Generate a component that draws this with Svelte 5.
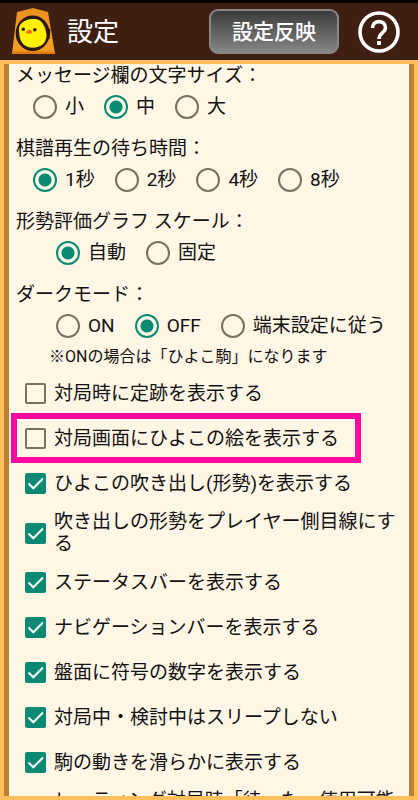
<script lang="ts">
	interface RadioGroup {
		name: string;
		title: string;
		options: string[];
		value: string;
		deep?: boolean;
		note?: string;
	}

	interface Toggle {
		label: string;
		checked: boolean;
		highlight?: boolean;
	}

	let groups = $state<RadioGroup[]>([
		{ name: 'font-size', title: 'メッセージ欄の文字サイズ：', options: ['小', '中', '大'], value: '中' },
		{ name: 'wait', title: '棋譜再生の待ち時間：', options: ['1秒', '2秒', '4秒', '8秒'], value: '1秒' },
		{ name: 'scale', title: '形勢評価グラフ スケール：', options: ['自動', '固定'], value: '自動', deep: true },
		{
			name: 'dark',
			title: 'ダークモード：',
			options: ['ON', 'OFF', '端末設定に従う'],
			value: 'OFF',
			deep: true,
			note: '※ONの場合は「ひよこ駒」になります'
		}
	]);

	let toggles = $state<Toggle[]>([
		{ label: '対局時に定跡を表示する', checked: false },
		{ label: '対局画面にひよこの絵を表示する', checked: false, highlight: true },
		{ label: 'ひよこの吹き出し(形勢)を表示する', checked: true },
		{ label: '吹き出しの形勢をプレイヤー側目線にする', checked: true },
		{ label: 'ステータスバーを表示する', checked: true },
		{ label: 'ナビゲーションバーを表示する', checked: true },
		{ label: '盤面に符号の数字を表示する', checked: true },
		{ label: '対局中・検討中はスリープしない', checked: true },
		{ label: '駒の動きを滑らかに表示する', checked: true },
		{ label: 'レーティング対局時「待った」使用可能にする', checked: true }
	]);
</script>

<div class="app">
	<header>
		<svg class="logo" viewBox="0 0 44 48" aria-hidden="true">
			<defs>
				<linearGradient id="koma" x1="0" y1="0" x2="0" y2="1">
					<stop offset="0" stop-color="#e88f1c" />
					<stop offset="0.5" stop-color="#f9a02a" />
					<stop offset="1" stop-color="#f59a1e" />
				</linearGradient>
			</defs>
			<path d="M21 0 L36 4 L43 46 H0 L5 4 Z" fill="url(#koma)" />
			<path d="M0 46 L0.5 43.500 H42.500 L43 46 Z" fill="#dd7d10" />
			<ellipse cx="20.700" cy="25.300" rx="15.300" ry="16" fill="#fbb12a" stroke="#2b1a10" stroke-width="3.500" />
			<path
				d="M21 11 C28 10.500 32 15 32 21 C32 23 35 24 34.500 28 C34 36 28 39.500 21 39.500 C13 39.500 8.500 35 8.500 29 C8.500 26 6.500 24 7 20 C8 14 14 11.500 21 11 Z"
				fill="#fff200"
			/>
			<path d="M35 22.500 L38.500 20.500 L37.500 31 L35.500 31 Z" fill="#2b1a10" />
			<circle cx="11.300" cy="21.300" r="1.700" fill="#2b1a10" />
			<circle cx="22.800" cy="21.800" r="1.800" fill="#2b1a10" />
			<path d="M13.500 24.500 Q17 19.500 20.500 24 Q17.500 27.500 13.500 24.500 Z" fill="#f0701c" />
		</svg>
		<h1>設定</h1>
		<button class="apply" type="button">設定反映</button>
		<button class="help" type="button" aria-label="ヘルプ">
			<svg viewBox="0 0 42 42" fill="none" stroke="#fff" aria-hidden="true">
				<circle cx="21" cy="21" r="19" stroke-width="3.600" />
				<path d="M14.500 17 C14.500 8.500 27.500 8.500 27.500 17 C27.500 21.500 21 22 21 28" stroke-width="3.600" />
				<path d="M19 30 H23 V34 H19 Z" fill="#fff" stroke="none" />
			</svg>
		</button>
	</header>

	<main>
		<div class="sheet">
			{#each groups as group}
				<fieldset>
					<legend>{group.title}</legend>
					<div class="options" class:deep={group.deep}>
						{#each group.options as option}
							<label class="option">
								<input type="radio" name={group.name} value={option} bind:group={group.value} />
								<span>{option}</span>
							</label>
						{/each}
					</div>
					{#if group.note}
						<p class="note">{group.note}</p>
					{/if}
				</fieldset>
			{/each}

			{#each toggles as toggle}
				<label class="toggle" class:highlight={toggle.highlight}>
					<span class="box">
						<input type="checkbox" bind:checked={toggle.checked} />
						<svg viewBox="0 0 21 21" fill="none" stroke="#fff" stroke-width="2" aria-hidden="true">
							<path d="M3.500 10.500 L8.300 15.300 L18 5.500" />
						</svg>
					</span>
					<span>{toggle.label}</span>
				</label>
			{/each}
		</div>
	</main>
</div>

<style>
	:global(body) {
		margin: 0;
	}

	.app {
		display: flex;
		flex-direction: column;
		height: 100vh;
		font-family: Roboto, 'Noto Sans CJK JP', sans-serif;
		font-size: 19px;
		line-height: 22px;
		color: #111;
	}

	header {
		display: flex;
		align-items: center;
		flex-shrink: 0;
		box-sizing: border-box;
		height: 60px;
		padding: 0 18px 0 12px;
		border-top: 3px solid #000;
		background: #3f1f12;
	}

	.logo {
		width: 44px;
		height: 48px;
	}

	h1 {
		margin: 0 auto 0 11px;
		font-size: 26px;
		font-weight: 400;
		line-height: 32px;
		color: #fff;
	}

	.apply {
		box-sizing: border-box;
		width: 130px;
		height: 45px;
		margin-right: 19px;
		padding: 0 0 3px;
		border: 2px solid #8b8683;
		border-radius: 9px;
		background: linear-gradient(#3c3c3c, #858585);
		font-family: inherit;
		font-size: 21px;
		font-weight: 500;
		color: #fff;
	}

	.help {
		width: 42px;
		height: 42px;
		padding: 0;
		border: none;
		background: none;
	}

	.help svg {
		display: block;
	}

	main {
		flex: 1;
		display: flex;
		min-height: 0;
		padding: 4px;
		background: #ffc05c;
	}

	.sheet {
		flex: 1;
		padding-top: 1px;
		border: solid #bf7f30;
		border-width: 0 5px;
		background: #fff6e6;
		overflow-y: auto;
		scrollbar-width: none;
	}

	fieldset {
		min-width: 0;
		margin: 0 0 11px;
		padding: 0 0 0 7px;
		border: none;
	}

	fieldset:last-of-type {
		margin-bottom: 3px;
	}

	legend {
		padding: 0;
	}

	.options {
		display: flex;
		gap: 20px;
		padding-left: 17px;
	}

	.options.deep {
		padding-left: 40px;
	}

	.option {
		display: flex;
		align-items: center;
		gap: 8px;
		height: 40px;
	}

	input {
		appearance: none;
		box-sizing: border-box;
		flex-shrink: 0;
		margin: 0;
		border: 2px solid #777162;
	}

	input[type='radio'] {
		width: 24px;
		height: 24px;
		border-radius: 50%;
	}

	input[type='radio']:checked {
		border-color: #0a8a72;
		background: radial-gradient(circle, #0a8a72 6px, transparent 7px);
	}

	.note {
		margin: 0;
		padding-left: 33px;
		font-size: 16px;
	}

	.toggle {
		position: relative;
		display: flex;
		align-items: center;
		gap: 8px;
		box-sizing: border-box;
		width: fit-content;
		min-height: 45px;
		padding: 5px 0 5px 16px;
	}

	.box {
		display: grid;
		flex-shrink: 0;
	}

	.box input,
	.box svg {
		grid-area: 1 / 1;
		width: 21px;
		height: 21px;
	}

	.box input {
		border-radius: 2px;
	}

	.box input:checked {
		border-color: #0a8a72;
		background: #0a8a72;
	}

	.box svg {
		visibility: hidden;
		pointer-events: none;
	}

	.box input:checked + svg {
		visibility: visible;
	}

	/* Marker frame drawn over the row and a little past it */
	.highlight::after {
		content: '';
		position: absolute;
		inset: -3px -22px -2px 2px;
		border: 6px solid #ff0aa0;
		pointer-events: none;
	}
</style>
